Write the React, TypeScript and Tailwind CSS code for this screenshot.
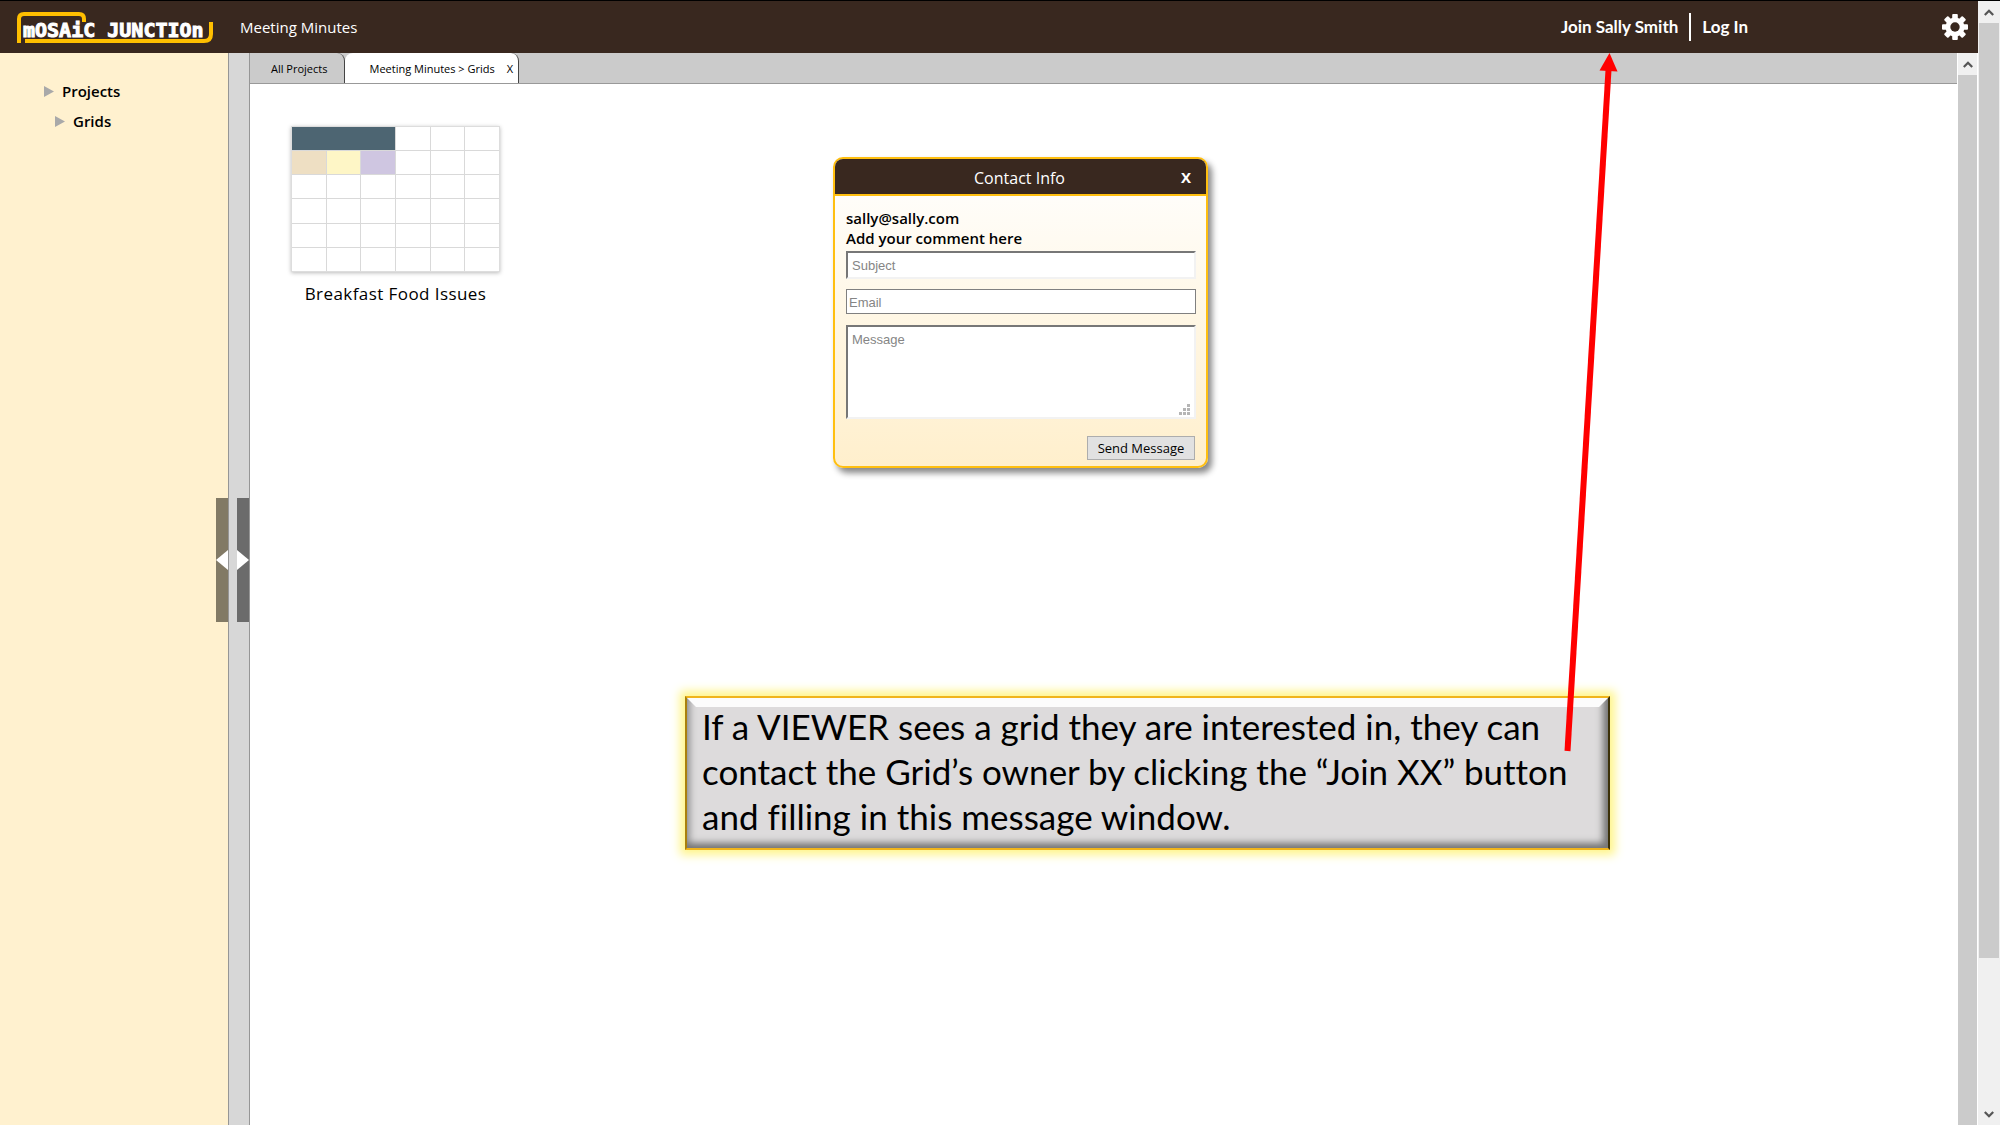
import React from "react";

const cells = Array.from({ length: 36 }, (_, i) => i).filter((i) => i !== 1 && i !== 2);

function cellClass(i: number) {
  if (i === 0) return "col-span-3 bg-[#4d6572]";
  if (i === 6) return "bg-[#eedfc3]";
  if (i === 7) return "bg-[#fef6c6]";
  if (i === 8) return "bg-[#cfc6e1]";
  return "bg-white";
}

function Logo() {
  return (
    <svg viewBox="0 0 200 34" className="h-[34px] w-[200px] shrink-0" role="img" aria-label="Mosaic Junction">
      <g fill="none" stroke="#ffbf00" strokeWidth="4">
        <path d="M3 33V9Q3 4 8 4H63Q68 4 68 9V12" />
        <path d="M9 31H188Q195 31 195 24V12" />
      </g>
      <text x="7" y="27" fill="#fff" stroke="#fff" strokeWidth="1" fontFamily="DejaVu Sans Mono" fontWeight="700" fontSize="20">
        mOSAiC JUNCTIOn
      </text>
    </svg>
  );
}

function Chevron({ down = false }: { down?: boolean }) {
  return (
    <svg viewBox="0 0 10 7" className="h-[7px] w-[10px]" aria-hidden="true">
      <path d={down ? "M.8 1 5 5.300 9.200 1" : "M.8 6 5 1.700 9.200 6"} fill="none" stroke="#555" strokeWidth="2.200" />
    </svg>
  );
}

function TreeItem({ label, className }: { label: string; className: string }) {
  return (
    <li className={className}>
      <a href="#" className="flex items-center gap-2 text-[15px] leading-[30px] font-semibold text-black">
        <svg viewBox="0 0 10 11" className="h-[11px] w-[10px]" aria-hidden="true">
          <path d="M0 0 10 5.500 0 11Z" fill="#a9a9a9" />
        </svg>
        {label}
      </a>
    </li>
  );
}

function Gear() {
  return (
    <svg viewBox="-13 -13 26 26" className="size-[26px]" aria-hidden="true">
      <g fill="#fff">
        {[0, 45, 90, 135].map((a) => (
          <rect key={a} x="-2.800" y="-13" width="5.600" height="26" rx="1" transform={`rotate(${a})`} />
        ))}
        <circle r="9.500" />
      </g>
      <circle r="4.700" fill="#39281f" />
    </svg>
  );
}

export default function App() {
  return (
    <div className="flex h-screen overflow-hidden border-t border-black bg-white font-['Open_Sans',sans-serif] text-black">
      <div className="flex min-w-0 flex-1 flex-col">
        <header className="flex h-[52px] shrink-0 items-center bg-[#39281f] text-white">
          <a href="#" className="ml-4">
            <Logo />
          </a>
          <span className="ml-6 text-[15px] leading-6">Meeting Minutes</span>
          <nav className="ml-auto flex items-center font-['Lato',sans-serif] text-[17px] font-bold">
            <a href="#" className="border-r-2 border-white pr-[11px] leading-7">Join Sally Smith</a>
            <a href="#" className="pl-[11px] leading-7">Log In</a>
          </nav>
          <button type="button" aria-label="Settings" className="mr-[10px] ml-[194px]">
            <Gear />
          </button>
        </header>

        <div className="flex min-h-0 flex-1">
          <aside className="flex w-[228px] shrink-0 items-stretch bg-[#fff1cf]">
            <ul className="flex-1 pt-[23px]">
              <TreeItem label="Projects" className="pl-11" />
              <TreeItem label="Grids" className="pl-[55px]" />
            </ul>
            <button type="button" aria-label="Collapse sidebar" className="mt-[445px] flex h-[124px] w-3 items-center bg-[#827a65]">
              <svg viewBox="0 0 12 20" className="h-5 w-3" aria-hidden="true">
                <path d="M12 0V20L0 10Z" fill="#fff" />
              </svg>
            </button>
          </aside>
          <div className="flex w-[22px] shrink-0 justify-end border-x border-[#969696] bg-[#d7d7d7]">
            <button type="button" aria-label="Expand sidebar" className="mt-[445px] flex h-[124px] w-3 items-center bg-[#6b6b6b]">
              <svg viewBox="0 0 12 20" className="h-5 w-3" aria-hidden="true">
                <path d="M0 0V20L12 10Z" fill="#fff" />
              </svg>
            </button>
          </div>

          <main className="relative flex min-w-0 flex-1 flex-col">
            <div className="flex h-[31px] shrink-0 border-b border-[#999] bg-[#cbcbcb] text-[11px]">
              <button type="button" className="rounded-tr-lg border-r border-[#444] pt-[2px] pr-[17px] pl-[21px]">All Projects</button>
              <div className="flex items-center gap-3 rounded-t-lg border-r border-[#444] bg-white pt-[2px] pr-[5px] pl-6">
                <button type="button">Meeting Minutes &gt; Grids</button>
                <button type="button" aria-label="Close tab">X</button>
              </div>
            </div>

            <figure className="mt-[42px] ml-[41px] w-[209px]">
              <div className="grid h-[146px] grid-cols-6 grid-rows-6 gap-px border border-[#ddd] bg-[#d9d9d9] shadow-[0_1px_4px_#bbb]">
                {cells.map((i) => (
                  <div key={i} className={cellClass(i)} />
                ))}
              </div>
              <figcaption className="mt-[10px] text-center text-[17px] leading-6 tracking-wide whitespace-nowrap">
                Breakfast Food Issues
              </figcaption>
            </figure>

            <section
              role="dialog"
              aria-labelledby="contact-title"
              className="absolute top-[104px] left-[583px] w-[375px] overflow-hidden rounded-[10px] border-2 border-[#ffbf10] bg-linear-to-b from-white to-[#ffefcc] shadow-[4px_5px_6px_#888]"
            >
              <header className="flex h-[37px] items-center border-b-2 border-[#ffbf10] bg-[#39281f] pt-[2px] pr-[15px] pl-[23px] text-white">
                <h2 id="contact-title" className="flex-1 text-center text-[16px]">Contact Info</h2>
                <button type="button" aria-label="Close" className="text-[15px] font-bold">X</button>
              </header>
              <form className="flex flex-col pt-3 pr-[10px] pb-[6px] pl-[11px]">
                <p className="text-[15px] leading-5 font-semibold">sally@sally.com</p>
                <p className="text-[15px] leading-5 font-semibold">Add your comment here</p>
                <input
                  aria-label="Subject"
                  placeholder="Subject"
                  className="mt-[3px] h-7 border-2 border-[#f2f2f2] border-t-[#777] border-l-[#777] bg-white px-1 font-['Liberation_Sans',sans-serif] text-[13px] placeholder:text-[#858585]"
                />
                <input
                  aria-label="Email"
                  placeholder="Email"
                  type="email"
                  className="mt-[10px] h-[25px] border border-[#808080] bg-white px-[2px] pt-[2px] font-['Liberation_Sans',sans-serif] text-[13px] placeholder:text-[#858585]"
                />
                <div className="relative mt-[11px] flex">
                  <textarea
                    aria-label="Message"
                    placeholder="Message"
                    className="h-[94px] w-full resize-none border-2 border-[#f2f2f2] border-t-[#777] border-l-[#777] bg-white px-1 py-[5px] font-['Liberation_Sans',sans-serif] text-[13px] leading-4 placeholder:text-[#858585]"
                  />
                  <svg viewBox="0 0 12 12" className="absolute right-[5px] bottom-[4px] size-3" aria-hidden="true">
                    <path d="M0 9h3v3H0zM4 9h3v3H4zM8 9h3v3H8zM4 5h3v3H4zM8 5h3v3H8zM8 1h3v3H8z" fill="#b5b5b5" />
                  </svg>
                </div>
                <button type="button" className="mt-[17px] mr-px h-6 w-[108px] self-end border border-[#adadad] bg-[#e1e1e1] pt-px text-[13px] whitespace-nowrap">
                  Send Message
                </button>
              </form>
            </section>

            <aside className="absolute top-[643px] left-[435px] w-[925px] border-2 border-y-[#f0b41c] border-r-[#3b3008] border-l-[#a97f0c] shadow-[0_0_9px_5px_#fff58a]">
              <div className="bg-[#dddbdc] shadow-[inset_0_-8px_7px_-3px_#777,inset_-8px_0_7px_-3px_#777,inset_7px_0_7px_-4px_#999]">
                <div className="h-[9px] bg-[#fcfcfc] [clip-path:polygon(0_0,100%_0,calc(100%-9px)_100%,9px_100%)]" />
                <p className="-mt-[3px] pb-[9px] pl-[15px] font-['Lato',sans-serif] text-[35px] leading-[45px] whitespace-nowrap [font-variant-ligatures:none]">
                  If a VIEWER sees a grid they are interested in, they can<br />
                  contact the Grid’s owner by clicking the “Join XX” button<br />
                  and filling in this message window.
                </p>
              </div>
            </aside>

            <svg viewBox="0 0 60 700" className="pointer-events-none absolute top-0 left-[1310px] h-[700px] w-[60px]" aria-hidden="true">
              <path d="M7.500 698 48.500 17" stroke="#f00" strokeWidth="6" />
              <path d="M49.500 0 57.500 18.500 39.500 17.500Z" fill="#f00" />
            </svg>
          </main>

          <div className="flex w-[21px] shrink-0 flex-col border-x border-white bg-[#cbcbcb]">
            <div className="flex h-[22px] shrink-0 items-center justify-center bg-[#f0f0f0]">
              <Chevron />
            </div>
          </div>
        </div>
      </div>

      <div className="flex w-[22px] shrink-0 flex-col items-center bg-[#f0f0f0]">
        <div className="flex h-[22px] shrink-0 items-center">
          <Chevron />
        </div>
        <div className="h-[935px] w-5 bg-[#cbcbcb]" />
        <div className="mt-auto flex h-[22px] shrink-0 items-center">
          <Chevron down />
        </div>
      </div>
    </div>
  );
}
